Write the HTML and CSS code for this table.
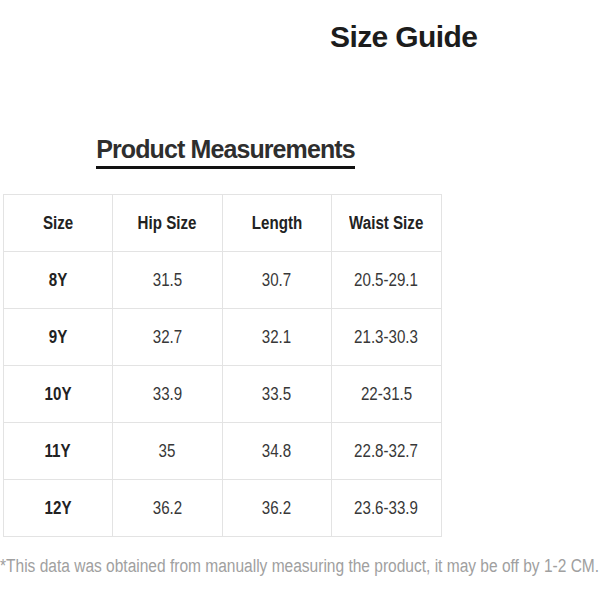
FILE: index.html
```html
<!DOCTYPE html>
<html>
<head>
<meta charset="utf-8">
<link rel="stylesheet" href="styles.css">
</head>
<body>
<div class="page">
  <h1 class="title">Size Guide</h1>
  <div class="section">
    <h2 class="heading">Product Measurements</h2>
  </div>
  <table class="sizes">
    <tr><th><span>Size</span></th><th><span>Hip Size</span></th><th><span>Length</span></th><th><span>Waist Size</span></th></tr>
    <tr><th><span>8Y</span></th><td><span>31.5</span></td><td><span>30.7</span></td><td><span>20.5-29.1</span></td></tr>
    <tr><th><span>9Y</span></th><td><span>32.7</span></td><td><span>32.1</span></td><td><span>21.3-30.3</span></td></tr>
    <tr><th><span>10Y</span></th><td><span>33.9</span></td><td><span>33.5</span></td><td><span>22-31.5</span></td></tr>
    <tr><th><span>11Y</span></th><td><span>35</span></td><td><span>34.8</span></td><td><span>22.8-32.7</span></td></tr>
    <tr><th><span>12Y</span></th><td><span>36.2</span></td><td><span>36.2</span></td><td><span>23.6-33.9</span></td></tr>
  </table>
  <p class="note"><span>*This data was obtained from manually measuring the product, it may be off by 1-2 CM.</span></p>
</div>
</body>
</html>
```
FILE: styles.css
```css
html, body {
  margin: 0;
  padding: 0;
  background: #fff;
}
.page {
  width: 600px;
  height: 600px;
  font-family: "Liberation Sans", Arial, sans-serif;
  color: #222;
  overflow: hidden;
}
.title {
  margin: 0;
  padding: 19px 0 0 330px;
  font-size: 30px;
  line-height: 36px;
  font-weight: bold;
  letter-spacing: -0.6px;
  color: #1c1c1c;
}
.section {
  width: 439px;
  margin-top: 80px;
  display: flex;
  justify-content: center;
  padding-left: 6px;
}
.heading {
  margin: 0;
  font-size: 25px;
  line-height: 28px;
  font-weight: bold;
  letter-spacing: -0.9px;
  color: #2e2e2e;
  border-bottom: 3.5px solid #111;
  padding-bottom: 3px;
}
.sizes {
  margin: 25px 0 0 3px;
  border-collapse: collapse;
  table-layout: fixed;
  font-size: 18px;
}
.sizes th, .sizes td {
  border: 1.5px solid #e3e3e3;
  height: 56px;
  padding: 0;
  text-align: center;
  vertical-align: middle;
}
.sizes th:nth-child(1), .sizes td:nth-child(1) { width: 108px; }
.sizes th:nth-child(2), .sizes td:nth-child(2) { width: 109px; }
.sizes th:nth-child(3), .sizes td:nth-child(3) { width: 108px; }
.sizes th:nth-child(4), .sizes td:nth-child(4) { width: 109px; }
.sizes span {
  display: inline-block;
  transform: scaleX(0.84);
  white-space: nowrap;
}
.sizes th {
  font-weight: bold;
  color: #222;
}
.sizes td {
  font-weight: normal;
  color: #383838;
}
.note {
  margin: 19px 0 0 0;
  font-size: 18px;
  line-height: 20px;
  color: #a0a0a0;
  white-space: nowrap;
}
.note span {
  display: inline-block;
  transform: scaleX(0.862);
  transform-origin: left center;
}
```
